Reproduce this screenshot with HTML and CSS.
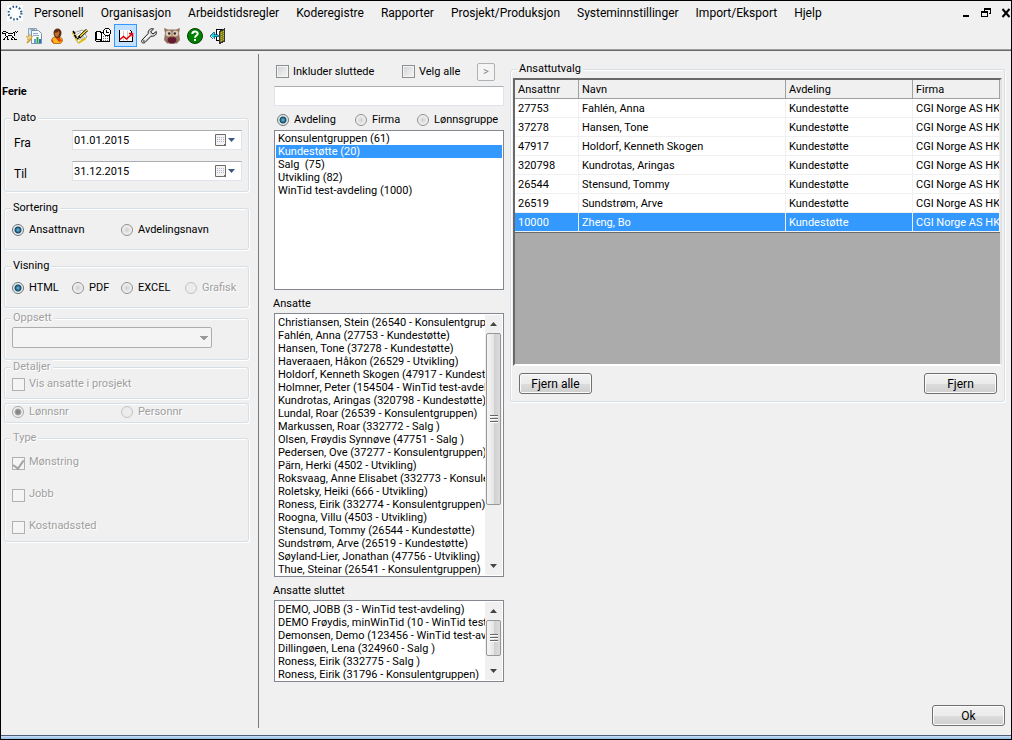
FILE: index.html
```html
<!DOCTYPE html>
<html lang="no">
<head>
<meta charset="utf-8">
<title>Ferie</title>
<link rel="stylesheet" href="styles.css">
</head>
<body>
<div class="window">
  <header class="top">
    <div class="menubar">
      <svg class="app-icon" viewBox="0 0 16 16" aria-hidden="true"><rect width="16" height="16" fill="#fff"/><circle cx="8" cy="8" r="6.4" fill="none" stroke="#2f5f92" stroke-width="2.2" stroke-dasharray="1.6 1.75"/></svg>
      <nav class="menu">
        <button>Personell</button><button>Organisasjon</button><button>Arbeidstidsregler</button><button>Koderegistre</button><button>Rapporter</button><button>Prosjekt/Produksjon</button><button>Systeminnstillinger</button><button>Import/Eksport</button><button>Hjelp</button>
      </nav>
      <div class="controls">
        <button aria-label="Minimer"><svg viewBox="0 0 10 10" shape-rendering="crispEdges"><path d="M2 7h6v2H2z"/></svg></button>
        <button aria-label="Gjenopprett"><svg viewBox="0 0 10 10" shape-rendering="crispEdges"><path fill="none" stroke="#000" d="M3 3V.5h6.500v5H8M.5 3.500h6v5h-6zM3 1.500h6M1 4.500h6"/></svg></button>
        <button aria-label="Lukk"><svg viewBox="0 0 10 10"><path fill="none" stroke="#000" stroke-width="2" d="M1.500 1l7 8M8.500 1l-7 8"/></svg></button>
      </div>
    </div>
    <div class="toolbar">
      <button class="tool tool-first" aria-label="Hund"><svg viewBox="0 0 16 16" shape-rendering="crispEdges"><path fill="#fff" d="M2 5h10v3H3z"/><path fill="none" stroke="#000" d="M1 3.500h3M0 4.500h1M0 5.500h4M4 4.500h2M6 5.500h5M11 4.500h2M13 3.500h1M14 4.500h1M15 3.500h1M3.500 6v2M4 8.500h2M6 7.500h4M3 9.500h1M2 10.500h1M1 11.500h2M5.500 9v3M6 11.500h1M10.500 8v1M11.500 9v1M12.500 10v2M13 11.500h2M12.500 5v3M10 9.500h1M9.500 10v2M10 11.500h1"/></svg></button>
      <button class="tool" aria-label="Rapport"><svg viewBox="0 0 16 16"><path fill="#d9e8f4" stroke="#8ea5b8" d="M2.500.5h8v10h-8z"/><path fill="#f7fbff" stroke="#7d94a8" d="M5.500 2.500h7l3 3v10h-10z"/><path stroke="#89aacc" d="M4 1.500h5M7 5.500h5M7 7.500h6"/><path fill="#5c9fd4" d="M8 11h2v4H8z"/><path fill="#36a137" d="M10.500 9h2v6h-2z"/><path fill="#2475c8" d="M13 11h2v4h-2z"/><path fill="#f4d476" stroke="#b39041" stroke-width=".5" d="M3.500 6l1 2.200 2.500.2-1.800 1.500.6 2.300-2.300-1.200-2.200 1.200.6-2.300L0 8.400l2.500-.2z"/><path stroke="#d58b16" stroke-width="1.500" d="M1 15l4-4"/></svg></button>
      <button class="tool" aria-label="Person"><svg viewBox="0 0 16 16"><path fill="#ffb41f" stroke="#9e4b00" stroke-width=".7" d="M2.500 13c0-3 2-4 4-4h3c2.500 0 4 1 4 4l-2 2.500h-7z"/><path fill="#d9430b" d="M6 9l4 5 3-1-3-4zM3 11v3l2 1z"/><path fill="#5c2d10" d="M4.500 5c0-6 8-6 8 0 0 3-2 5-4 5s-4-2-4-5z"/><path fill="#bb702d" d="M5.500 4.500c2 .5 3 0 4-1.500 2 2 0 5.500-1.500 6-1.500-.5-2.500-2-2.500-4.500z"/></svg></button>
      <button class="tool" aria-label="Rediger"><svg viewBox="0 0 16 16"><path fill="#fff" stroke="#777" stroke-width=".7" d="M1.500 5l9-3 4.500 7-9 6z"/><path fill="none" stroke="#777" stroke-width=".6" d="M4 7l5-3M5 9l6-3M7 12l5-4M9 12l4-3"/><path fill="none" stroke="#e3bd00" stroke-width="2" d="M0 5.500l3-1M1.500 8.500l3-1M3.500 12l3-1M6.500 15l7-4.500"/><path stroke="#000" stroke-width="3" d="M7 9.500l8-7.500"/><path stroke="#ffe52c" stroke-width="1.400" d="M8 8.500l7-6.500"/><path stroke="#000" stroke-width="1.500" d="M5 11l3-2M1 3l2 3M2.500 7l2 3"/></svg></button>
      <button class="tool" aria-label="Tidsregister"><svg viewBox="0 0 16 16" shape-rendering="crispEdges"><path fill="#fff" stroke="#000" d="M1.500 3.500h3l2 1v8l-2-1h-3z"/><path fill="#fff" stroke="#000" d="M6.500 4.500h8v9h-8z"/><path stroke="#000" d="M.5 4v9M1 13.500h5"/><path stroke="#777" stroke-dasharray="1 1" d="M8 8.500h6M8 10.500h6M8 12.500h5"/><circle cx="12" cy="4" r="3.500" fill="#fff" stroke="#000"/><path fill="none" stroke="#000" d="M11.500 2v2.500h2"/></svg></button>
      <button class="tool tool-on" aria-label="Statistikk" aria-pressed="true"><svg viewBox="0 0 16 16" shape-rendering="crispEdges"><path fill="#fff" d="M1 2h12l2 3v9H1z"/><path stroke="#ccc" d="M5.500 3v10M9.500 3v10"/><path fill="none" stroke="#000" d="M1.500 2v12M1 13.500h14M14.500 5v9M12 2.500h1M13.500 3v2"/></svg><svg class="trend" viewBox="0 0 16 16"><path fill="none" stroke="#e00000" stroke-width="1.500" d="M2 11.500l3.500-3 3 2.500 5.500-5M11 5.500h3.500V9"/></svg></button>
      <button class="tool" aria-label="Verktøy"><svg viewBox="0 0 16 16"><path fill="#d5d5d5" stroke="#222" d="M15.300 3.500L12 6 9.700 4 12.500.8C9.500 0 6.700 2.200 7.200 5.500L1 12c-1.500 2 .8 4 3 2.500l6-6.200c4 .2 6-2 5.300-4.800z"/><path stroke="#fff" stroke-width="1.200" d="M3.500 11.500L9 6"/><circle cx="2.900" cy="13" r=".8" fill="#222"/></svg></button>
      <button class="tool" aria-label="Ugle"><svg viewBox="0 0 16 16"><path fill="#94745e" d="M0 0l4 1.500h8L16 0l-1 5 1 7-3 3.500H3L0 12l1-7z"/><path fill="#631931" d="M4 10l4-1.500 4 1.500.5 3-2.500 2.500H6L3.500 13z"/><circle cx="4.600" cy="5.500" r="3" fill="#d9cabb"/><circle cx="11.400" cy="5.500" r="3" fill="#d9cabb"/><circle cx="5.200" cy="5.500" r="1.200" fill="#33251f"/><circle cx="10.800" cy="5.500" r="1.200" fill="#33251f"/><path fill="#e69b25" d="M7 7h2l-1 3z"/></svg></button>
      <button class="tool" aria-label="Hjelp"><svg viewBox="0 0 16 16"><circle cx="8" cy="8" r="7.500" fill="#008000" stroke="#003d00"/><path fill="none" stroke="#fff" stroke-width="2" d="M5.300 6c0-3.300 5.400-3.300 5.400-.3 0 1.800-2.700 1.800-2.700 4"/><path fill="#fff" d="M7 11h2v2H7z"/></svg></button>
      <button class="tool" aria-label="Avslutt"><svg viewBox="0 0 16 16" shape-rendering="crispEdges"><path fill="#fff" stroke="#000" d="M6.500 1.500h8v11h-8z"/><path fill="#807d1b" stroke="#333" d="M9.500 3.500l5-2.500v12l-5 2.500z"/><path stroke="#c5bd45" stroke-dasharray="1 1" d="M11.500 4v9M13.500 3v9"/><path fill="#21cbdc" stroke="#005b78" stroke-width=".8" d="M.5 7.500L4 4v2.500h4v2H4V11z"/></svg></button>
    </div>
  </header>

  <main class="content">
    <section class="options">
      <h1>Ferie</h1>
      <fieldset class="group dato">
        <legend>Dato</legend>
        <div class="date-row"><label for="fra">Fra</label>
          <div class="date-box"><input id="fra" type="text" value="01.01.2015"><button aria-label="Velg fra-dato"><svg viewBox="0 0 22 14"><path fill="#f5f3f1" stroke="#72696a" d="M1.500 1.500h10v9l-2 2h-8z"/><path stroke="#a9b5c4" stroke-dasharray="1 1" d="M3 4.500h7M3 6.500h7M3 8.500h7"/><path fill="#72696a" d="M9 13l3-3v3z"/><path fill="#3c5783" d="M14 5h7l-3.500 4z"/></svg></button></div></div>
        <div class="date-row"><label for="til">Til</label>
          <div class="date-box"><input id="til" type="text" value="31.12.2015"><button aria-label="Velg til-dato"><svg viewBox="0 0 22 14"><path fill="#f5f3f1" stroke="#72696a" d="M1.500 1.500h10v9l-2 2h-8z"/><path stroke="#a9b5c4" stroke-dasharray="1 1" d="M3 4.500h7M3 6.500h7M3 8.500h7"/><path fill="#72696a" d="M9 13l3-3v3z"/><path fill="#3c5783" d="M14 5h7l-3.500 4z"/></svg></button></div></div>
      </fieldset>
      <fieldset class="group choice">
        <legend>Sortering</legend>
        <div class="two"><label><input type="radio" name="sort" checked>Ansattnavn</label><label><input type="radio" name="sort">Avdelingsnavn</label></div>
      </fieldset>
      <fieldset class="group choice">
        <legend>Visning</legend>
        <div class="four"><label><input type="radio" name="vis" checked>HTML</label><label><input type="radio" name="vis">PDF</label><label><input type="radio" name="vis">EXCEL</label><label class="off"><input type="radio" name="vis" disabled>Grafisk</label></div>
      </fieldset>
      <fieldset class="group oppsett" disabled>
        <legend>Oppsett</legend>
        <select aria-label="Oppsett"><option></option></select>
      </fieldset>
      <fieldset class="group detaljer" disabled>
        <legend>Detaljer</legend>
        <label><input type="checkbox">Vis ansatte i prosjekt</label>
      </fieldset>
      <fieldset class="group nummer" disabled>
        <div class="two"><label><input type="radio" name="nr" checked>Lønnsnr</label><label><input type="radio" name="nr">Personnr</label></div>
      </fieldset>
      <fieldset class="group type" disabled>
        <legend>Type</legend>
        <label><input type="checkbox" checked>Mønstring</label>
        <label><input type="checkbox">Jobb</label>
        <label><input type="checkbox">Kostnadssted</label>
      </fieldset>
    </section>

    <section class="picker">
      <div class="checks"><label><input type="checkbox">Inkluder sluttede</label><label><input type="checkbox">Velg alle</label><button class="next" disabled>&gt;</button></div>
      <input class="search" type="text" aria-label="Søk">
      <div class="by"><label><input type="radio" name="by" checked>Avdeling</label><label><input type="radio" name="by">Firma</label><label><input type="radio" name="by">Lønnsgruppe</label></div>
      <div class="listbox avdelinger">
        <ul role="listbox" aria-label="Avdelinger">
          <li role="option">Konsulentgruppen (61)</li>
          <li role="option" aria-selected="true">Kundestøtte (20)</li>
          <li role="option">Salg&nbsp; (75)</li>
          <li role="option">Utvikling (82)</li>
          <li role="option">WinTid test-avdeling (1000)</li>
        </ul>
      </div>
      <h2 id="ansatte">Ansatte</h2>
      <div class="listbox ansatte">
        <ul role="listbox" aria-labelledby="ansatte">
          <li role="option">Christiansen, Stein (26540 - Konsulentgruppen)</li>
          <li role="option">Fahlén, Anna (27753 - Kundestøtte)</li>
          <li role="option">Hansen, Tone (37278 - Kundestøtte)</li>
          <li role="option">Haveraaen, Håkon (26529 - Utvikling)</li>
          <li role="option">Holdorf, Kenneth Skogen (47917 - Kundestøtte)</li>
          <li role="option">Holmner, Peter (154504 - WinTid test-avdeling)</li>
          <li role="option">Kundrotas, Aringas (320798 - Kundestøtte)</li>
          <li role="option">Lundal, Roar (26539 - Konsulentgruppen)</li>
          <li role="option">Markussen, Roar (332772 - Salg )</li>
          <li role="option">Olsen, Frøydis Synnøve (47751 - Salg )</li>
          <li role="option">Pedersen, Ove (37277 - Konsulentgruppen)</li>
          <li role="option">Pärn, Herki (4502 - Utvikling)</li>
          <li role="option">Roksvaag, Anne Elisabet (332773 - Konsulentgruppen)</li>
          <li role="option">Roletsky, Heiki (666 - Utvikling)</li>
          <li role="option">Roness, Eirik (332774 - Konsulentgruppen)</li>
          <li role="option">Roogna, Villu (4503 - Utvikling)</li>
          <li role="option">Stensund, Tommy (26544 - Kundestøtte)</li>
          <li role="option">Sundstrøm, Arve (26519 - Kundestøtte)</li>
          <li role="option">Søyland-Lier, Jonathan (47756 - Utvikling)</li>
          <li role="option">Thue, Steinar (26541 - Konsulentgruppen)</li>
        </ul>
        <div class="scroll"><button aria-label="Opp"><svg viewBox="0 0 7 4"><path d="M0 4l3.500-4L7 4z"/></svg></button><div class="track"><div class="thumb thumb-long"><i></i></div></div><button aria-label="Ned"><svg viewBox="0 0 7 4"><path d="M0 0h7L3.500 4z"/></svg></button></div>
      </div>
      <h2 id="sluttet">Ansatte sluttet</h2>
      <div class="listbox sluttet">
        <ul role="listbox" aria-labelledby="sluttet">
          <li role="option">DEMO, JOBB (3 - WinTid test-avdeling)</li>
          <li role="option">DEMO Frøydis, minWinTid (10 - WinTid test-avdeling)</li>
          <li role="option">Demonsen, Demo (123456 - WinTid test-avdeling)</li>
          <li role="option">Dillingøen, Lena (324960 - Salg )</li>
          <li role="option">Roness, Eirik (332775 - Salg )</li>
          <li role="option">Roness, Eirik (31796 - Konsulentgruppen)</li>
        </ul>
        <div class="scroll"><button aria-label="Opp"><svg viewBox="0 0 7 4"><path d="M0 4l3.500-4L7 4z"/></svg></button><div class="track"><div class="thumb thumb-short"><i></i></div></div><button aria-label="Ned"><svg viewBox="0 0 7 4"><path d="M0 0h7L3.500 4z"/></svg></button></div>
      </div>
    </section>

    <section class="result">
      <fieldset class="group utvalg">
        <legend>Ansattutvalg</legend>
        <div class="grid">
          <table>
            <colgroup><col class="c-nr"><col class="c-navn"><col class="c-avd"><col></colgroup>
            <thead><tr><th>Ansattnr</th><th>Navn</th><th>Avdeling</th><th>Firma</th></tr></thead>
            <tbody>
              <tr><td>27753</td><td>Fahlén, Anna</td><td>Kundestøtte</td><td>CGI Norge AS HK</td></tr>
              <tr><td>37278</td><td>Hansen, Tone</td><td>Kundestøtte</td><td>CGI Norge AS HK</td></tr>
              <tr><td>47917</td><td>Holdorf, Kenneth Skogen</td><td>Kundestøtte</td><td>CGI Norge AS HK</td></tr>
              <tr><td>320798</td><td>Kundrotas, Aringas</td><td>Kundestøtte</td><td>CGI Norge AS HK</td></tr>
              <tr><td>26544</td><td>Stensund, Tommy</td><td>Kundestøtte</td><td>CGI Norge AS HK</td></tr>
              <tr><td>26519</td><td>Sundstrøm, Arve</td><td>Kundestøtte</td><td>CGI Norge AS HK</td></tr>
              <tr class="selected"><td>10000</td><td>Zheng, Bo</td><td>Kundestøtte</td><td>CGI Norge AS HK</td></tr>
            </tbody>
          </table>
        </div>
        <div class="actions"><button class="btn">Fjern alle</button><button class="btn">Fjern</button></div>
      </fieldset>
      <button class="btn ok">Ok</button>
    </section>
  </main>
  <footer class="edge"></footer>
</div>
</body>
</html>
```
FILE: styles.css
```css
* { box-sizing: border-box; }
body { margin: 0; background: #f0f0f0; color: #000; font: 11px/14px Roboto, "Liberation Sans", sans-serif; }
button, input, select { font: inherit; color: inherit; margin: 0; }
button { padding: 0; border: 0; background: none; }
h1, h2 { margin: 0; font-size: 11px; line-height: 14px; }
h2 { font-weight: 400; }
svg { display: block; }
.window { min-height: 100vh; display: flex; flex-direction: column; border: 1px solid #000; }

/* Menu and toolbar */
.top { border-bottom: 1px solid #696969; box-shadow: inset 0 -1px #a0a0a0; padding-bottom: 3px; }
.menubar { display: flex; align-items: center; height: 23px; padding-left: 6px; }
.app-icon { width: 16px; height: 16px; margin-right: 11px; }
.menu { display: flex; gap: 17px; font-size: 12px; line-height: 16px; }
.controls { display: flex; gap: 10px; margin-left: auto; }
.controls svg { width: 10px; height: 10px; }
.toolbar { display: flex; height: 23px; }
.tool { display: flex; align-items: center; justify-content: center; width: 23px; height: 23px; }
.tool svg { width: 16px; height: 16px; flex: none; }
.tool-first { width: 21px; justify-content: flex-start; padding-left: 1px; }
.tool-on { display: grid; border: 1px solid #3399ff; background: #c2e0ff; }
.tool-on svg { grid-area: 1 / 1; }

/* Left panel */
.content { flex: 1; display: flex; }
.options { width: 258px; flex: none; margin: 3px 0 7px; padding: 31px 9px 0 3px; border-right: 1px solid #7b7b7b; }
.options h1 { margin-left: -2px; }
.group { min-width: 0; margin: 0; padding: 0 7px; border: 1px solid #d5dfe5; border-radius: 3px; box-shadow: inset 1px 1px #fff, 1px 1px #fff; }
legend { padding: 0 2px; margin-left: -1px; background: #f0f0f0; }
.group:disabled, .off { color: #a0a0a0; text-shadow: 1px 1px #fff; }
.dato { height: 81px; margin-top: 12px; padding-right: 6px; }
.choice { height: 49px; margin-top: 9px; }
.oppsett { height: 49px; margin-top: 3px; }
.detaljer { height: 39px; }
.nummer { height: 20px; margin-top: 4px; padding-top: 1px; }
.type { height: 111px; margin-top: 8px; }

.date-row { display: flex; justify-content: space-between; padding-left: 2px; margin-top: 5px; }
.date-row + .date-row { margin-top: 11px; }
.date-row label { padding-top: 6px; font-size: 12px; }
.date-box { display: flex; align-items: center; width: 170px; height: 20px; background: #fff; border: 1px solid #e2e3ea; border-top-color: #abadb3; }
.date-box input { flex: 1; min-width: 0; padding: 1px 1px 0; border: 0; background: none; outline: 0; }
.date-box button { width: 22px; margin-right: 5px; }

label { display: flex; align-items: center; white-space: nowrap; }
input[type=radio], input[type=checkbox] { appearance: none; flex: none; margin: 0; }
input[type=radio] { width: 12px; height: 12px; margin-right: 5px; border: 1px solid #8e8f8f; border-radius: 50%; background: radial-gradient(#d0d0d0, #f4f4f4 5px); }
input[type=radio]:checked { background: radial-gradient(circle at 5px 5px, #6cc5ee, #12455e 3px, #1c4559 3px, #e8f0f4 4px); border-color: #6d7376; }
input[type=radio]:disabled { border-color: #c2c2c2; background: #ececec; }
input[type=radio]:checked:disabled { border-color: #a8a8a8; background: radial-gradient(#888 2px, #aaa 3px, #f4f4f4 4px); }
input[type=checkbox] { width: 13px; height: 13px; margin-right: 4px; border: 1px solid #8e8f8f; background: linear-gradient(135deg, #cfd3d7, #f6f6f6); box-shadow: inset 0 0 0 1px #f4f4f4; }
input[type=checkbox]:disabled { border-color: #b1b1b1; background: #f5f5f5; }
input[type=checkbox]:checked { display: grid; place-items: start center; }
input[type=checkbox]:checked::after { content: ""; width: 5px; height: 9px; border: solid #a4a4a4; border-width: 0 2px 2px 0; transform: rotate(35deg); }
.two { display: grid; grid-template-columns: 109px 1fr; }
.four { display: grid; grid-template-columns: 60px 49px 64px 1fr; }
.choice > div { padding-top: 8px; }
.oppsett select { display: block; width: 200px; height: 21px; margin-top: 2px; border: 1px solid #adadad; border-radius: 2px; appearance: none; opacity: 1; background: linear-gradient(to top right, #0000 50%, #9a9a9a 50%) no-repeat 187px 8px / 4px 4px, linear-gradient(to top left, #0000 50%, #9a9a9a 50%) no-repeat 191px 8px / 4px 4px, #f4f4f4; }
.detaljer label { margin-top: 3px; }
.type label { height: 16px; margin-top: 16px; align-items: flex-start; }
.type legend + label { margin-top: 10px; }
.type input { margin-top: 2px; }

/* Middle panel */
.picker { width: 230px; flex: none; margin-left: 15px; padding-top: 11px; }
.checks { display: flex; align-items: center; height: 19px; padding-left: 2px; }
.checks label:first-child { width: 126px; }
.next { width: 18px; height: 18px; margin-left: auto; margin-right: 9px; border: 1px solid #adb2b5; border-radius: 2px; background: #f4f4f4; color: #838383; }
.search { display: block; width: 100%; height: 20px; margin-top: 5px; padding: 0 3px; border: 1px solid #e2e3ea; border-top-color: #abadb3; background: #fff; }
.by { display: grid; grid-template-columns: 78px 62px 1fr; padding: 7px 0 3px 3px; }
.listbox { display: flex; border: 1px solid #828790; background: #fff; padding: 1px; }
.listbox ul { flex: 1; min-width: 0; margin: 0; padding: 1px 0 0; list-style: none; line-height: 13px; overflow: hidden; }
.listbox li { padding-left: 2px; white-space: nowrap; }
.listbox [aria-selected=true] { background: #3399ff; color: #fff; }
.avdelinger { height: 160px; }
.avdelinger ul { padding-top: 0; }
.ansatte { height: 264px; }
.sluttet { height: 82px; }
.picker h2 { margin: 7px 0 2px -1px; }
.scroll { width: 17px; flex: none; display: flex; flex-direction: column; background: #f0f0f0; }
.scroll button { height: 18px; display: grid; place-items: center; }
.scroll svg { width: 7px; height: 4px; fill: #444; }
.track { flex: 1; padding: 0 1px; }
.thumb { display: grid; place-items: center; border: 1px solid #979797; border-radius: 2px; background: linear-gradient(90deg, #f5f5f5, #e6e6e6 50%, #cfcfcf 50%, #dcdcdc); }
.thumb i { width: 8px; height: 9px; background: repeating-linear-gradient(#666 0 1px, #fff 1px 2px, #0000 2px 3px); }
.thumb-long { height: 172px; }
.thumb-short { height: 36px; }

/* Right panel */
.result { flex: 1; min-width: 0; display: flex; flex-direction: column; justify-content: space-between; align-items: flex-end; padding: 11px 6px 9px 6px; }
.utvalg { width: 100%; padding: 0 2px 7px; }
.utvalg legend { margin-left: 4px; }
.grid { height: 288px; margin-top: 2px; overflow: hidden; border: 2px solid #696969; border-right-color: #e3e3e3; border-bottom-color: #fff; background: #ababab; }
table { width: 100%; table-layout: fixed; border-collapse: separate; border-spacing: 0; border-bottom: 1px solid #696969; }
.c-nr { width: 64px; }
.c-navn { width: 207px; }
.c-avd { width: 127px; }
th, td { height: 19px; padding: 1px 3px 0; text-align: left; font-weight: 400; line-height: 14px; white-space: nowrap; overflow: hidden; border-right: 1px solid #f0f0f0; border-bottom: 1px solid #f0f0f0; }
td { padding-top: 2px; }
th { background: #f0f0f0; border-color: #a0a0a0; }
td { background: #fff; }
th:last-child, td:last-child { padding-right: 0; }
.selected td { background: #3399ff; color: #fff; }
.actions { display: flex; justify-content: space-between; padding: 7px 5px 0 6px; }
.btn { width: 73px; height: 21px; border: 1px solid #707070; border-radius: 3px; font-size: 12px; box-shadow: inset 0 0 0 1px #fbfbfb; background: linear-gradient(#f2f2f2, #ebebeb 50%, #dddddd 50%, #cfcfcf); }
.edge { height: 4px; border-top: 1px solid #4d6078; background: linear-gradient(#cfe3f7, #8fb9e3); }
```
